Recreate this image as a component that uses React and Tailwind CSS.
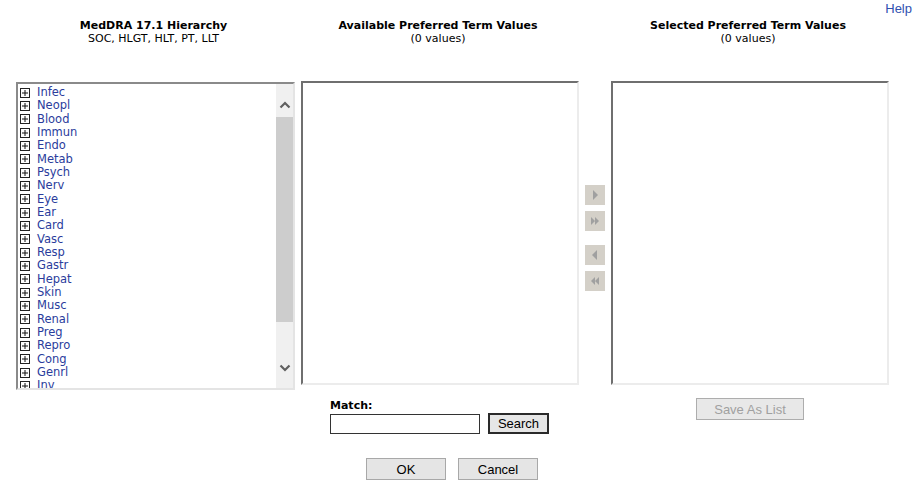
import React from 'react';

const verdana = { fontFamily: '"DejaVu Sans", Verdana, sans-serif' };
const arial = { fontFamily: '"Liberation Sans", Arial, sans-serif' };

const socList = [
  'Infec', 'Neopl', 'Blood', 'Immun', 'Endo', 'Metab', 'Psych', 'Nerv', 'Eye', 'Ear', 'Card',
  'Vasc', 'Resp', 'Gastr', 'Hepat', 'Skin', 'Musc', 'Renal', 'Preg', 'Repro', 'Cong', 'Genrl', 'Inv',
];

const PlusBox = () => (
  <svg width="10" height="10" viewBox="0 0 10 10" className="shrink-0">
    <rect x="0.5" y="0.5" width="9" height="9" fill="#fff" stroke="#222" />
    <path d="M2 5h6M5 2v6" stroke="#111" />
  </svg>
);

const Chevron = ({ down = false }) => (
  <svg width="12" height="8" viewBox="0 0 12 8">
    <path
      d={down ? 'M1.5 1.5 6 6l4.5-4.5' : 'M1.5 6.5 6 2l4.5 4.5'}
      fill="none"
      stroke="#606060"
      strokeWidth="2.2"
    />
  </svg>
);

const ColumnHeader = ({ title, sub, width }) => (
  <div className={`${width} shrink-0 text-center text-[11px] leading-[13px] text-black`} style={verdana}>
    <div className="font-bold">{title}</div>
    <div>{sub}</div>
  </div>
);

const MoveButton = ({ dir, double = false }) => {
  const right = dir === 'right';
  return (
    <div className="w-[20px] h-[20px] bg-[#d4d0c8] flex items-center justify-center">
      <svg width="12" height="10" viewBox="0 0 12 10">
        {double ? (
          right ? (
            <path d="M2 1l4 4-4 4zM6 1l4 4-4 4z" fill="#a0a0a0" />
          ) : (
            <path d="M10 1 6 5l4 4zM6 1 2 5l4 4z" fill="#a0a0a0" />
          )
        ) : right ? (
          <path d="M4 0l5 5-5 5z" fill="#a0a0a0" />
        ) : (
          <path d="M8 0 3 5l5 5z" fill="#a0a0a0" />
        )}
      </svg>
    </div>
  );
};

const ValueBox = () => (
  <div className="w-[278px] h-[304px] shrink-0 bg-white border-2 border-t-[#6f6f6f] border-l-[#6f6f6f] border-r-[#ececec] border-b-[#ececec]" />
);

const App = () => {
  return (
    <div className="w-[920px] h-[491px] bg-white relative" style={verdana}>
      <div className="flex justify-end pr-[8px] pt-[2px] h-[16px]">
        <span className="text-[13px] leading-[14px] text-[#3050b0]" style={arial}>
          Help
        </span>
      </div>

      <div className="flex pl-[14px] pt-[3px] gap-[6px]">
        <ColumnHeader width="w-[279px]" title="MedDRA 17.1 Hierarchy" sub="SOC, HLGT, HLT, PT, LLT" />
        <ColumnHeader width="w-[278px]" title="Available Preferred Term Values" sub="(0 values)" />
        <div className="w-[20px] shrink-0" />
        <ColumnHeader width="w-[278px]" title="Selected Preferred Term Values" sub="(0 values)" />
      </div>

      <div className="flex items-start pl-[16px] pt-[36px] gap-[6px]">
        {/* hierarchy tree */}
        <div className="w-[279px] h-[308px] mt-[1px] shrink-0 flex bg-white border-2 border-t-[#8a8a8a] border-l-[#8a8a8a] border-r-[#e4e4e4] border-b-[#e4e4e4]">
          <div className="flex-1 overflow-hidden pl-[2px] pt-[2px]">
            {socList.map((soc) => (
              <div key={soc} className="flex items-center h-[13.33px] gap-[7px] text-[11.5px] text-[#2a3c9c]">
                <PlusBox />
                <span className="leading-[13px]">{soc}</span>
              </div>
            ))}
          </div>
          <div className="w-[17px] flex flex-col bg-[#f0f0f0]">
            <div className="h-[33px] flex items-end justify-center pb-[8px]">
              <Chevron />
            </div>
            <div className="h-[205px] bg-[#cdcdcd]" />
            <div className="flex-1 flex items-end justify-center pb-[16px]">
              <Chevron down />
            </div>
          </div>
        </div>

        <ValueBox />

        <div className="w-[20px] shrink-0 flex flex-col pt-[104px]">
          <MoveButton dir="right" />
          <div className="h-[6px]" />
          <MoveButton dir="right" double />
          <div className="h-[14px]" />
          <MoveButton dir="left" />
          <div className="h-[6px]" />
          <MoveButton dir="left" double />
        </div>

        <ValueBox />
      </div>

      <div className="flex pl-[301px] pt-[5px]">
        <div className="w-[310px] shrink-0 pl-[29px] pt-[4px]">
          <div className="text-[11px] leading-[13px] font-bold text-black">Match:</div>
          <div className="flex items-center gap-[8px] mt-[1px]">
            <input
              type="text"
              className="w-[150px] h-[20px] border border-[#333] bg-white outline-none"
            />
            <button
              className="w-[61px] h-[21px] border-2 border-[#2a2a2a] bg-[#e6e6e6] text-[13px] text-black leading-none"
              style={arial}
            >
              Search
            </button>
          </div>
        </div>
        <div className="w-[278px] shrink-0 flex justify-center pt-[3px]">
          <button
            className="w-[108px] h-[22px] border border-[#adadad] bg-[#e8e8e8] text-[13px] text-[#a0a0a0] leading-none"
            style={arial}
          >
            Save As List
          </button>
        </div>
      </div>

      <div className="flex pl-[366px] pt-[24px] gap-[12px]">
        {['OK', 'Cancel'].map((label) => (
          <button
            key={label}
            className="w-[80px] h-[22px] border border-[#a8a8a8] bg-[#e5e5e5] text-[13px] text-black leading-none"
            style={arial}
          >
            {label}
          </button>
        ))}
      </div>
    </div>
  );
};

export default App;
